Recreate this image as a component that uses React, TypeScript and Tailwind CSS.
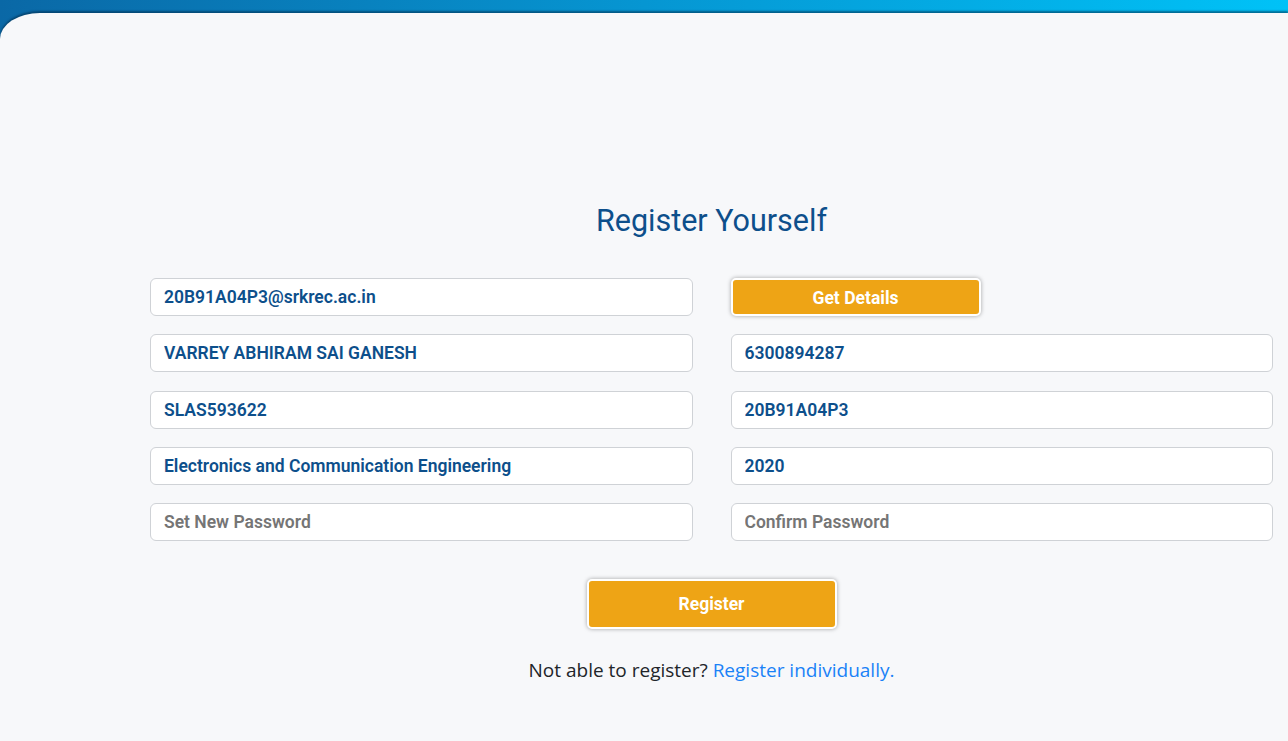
import React from "react";

const inputCls =
  "h-[38px] w-full rounded-[6px] border border-[#cfd2d6] bg-white px-[13px] text-[17.5px] font-semibold text-[#0d4f8b] outline-none placeholder:text-[#757575]";

function Field({ value, placeholder }: { value?: string; placeholder?: string }) {
  return (
    <input
      className={inputCls}
      style={{ fontFamily: "Roboto, sans-serif" }}
      defaultValue={value}
      placeholder={placeholder}
      readOnly={!!value}
    />
  );
}

export default function App() {
  return (
    <div className="min-h-[741px] w-full bg-gradient-to-r from-[#0a68a6] via-[#0696d2] to-[#00c2f7]">
      <div className="h-[13px]" />
      <div className="min-h-[728px] rounded-tl-[40px_26px] bg-[#f7f8fa] shadow-[0_-2px_2px_rgba(0,40,70,0.55)]">
        <div className="pl-[150px] pr-[15px] pt-[190px]" style={{ fontFamily: "Roboto, sans-serif" }}>
          <h1 className="text-center text-[30.5px] leading-[36px] font-normal text-[#0d4f8b]">Register Yourself</h1>
          <div className="mt-[39px] grid grid-cols-2 gap-x-[38px] gap-y-[18.25px]">
            <Field value="20B91A04P3@srkrec.ac.in" />
            <div>
              <button className="h-[38px] w-[250px] rounded-[5px] border-2 border-white bg-[#eea415] pt-[3px] text-[17.5px] font-bold text-white shadow-[0_0_4px_rgba(0,0,0,0.35)]">
                Get Details
              </button>
            </div>
            <Field value="VARREY ABHIRAM SAI GANESH" />
            <Field value="6300894287" />
            <Field value="SLAS593622" />
            <Field value="20B91A04P3" />
            <Field value="Electronics and Communication Engineering" />
            <Field value="2020" />
            <Field placeholder="Set New Password" />
            <Field placeholder="Confirm Password" />
          </div>
          <div className="mt-[38px] flex justify-center">
            <button className="h-[50px] w-[250px] rounded-[5px] border-2 border-white bg-[#eea415] text-[17.5px] font-bold text-white shadow-[0_0_4px_rgba(0,0,0,0.35)]">
              Register
            </button>
          </div>
          <p
            className="mt-[28px] text-center text-[19px] leading-[26px] text-[#212529]"
            style={{ fontFamily: "'Open Sans', 'Noto Sans', sans-serif" }}
          >
            Not able to register? <a className="text-[#1a82f7]">Register individually.</a>
          </p>
        </div>
      </div>
    </div>
  );
}
